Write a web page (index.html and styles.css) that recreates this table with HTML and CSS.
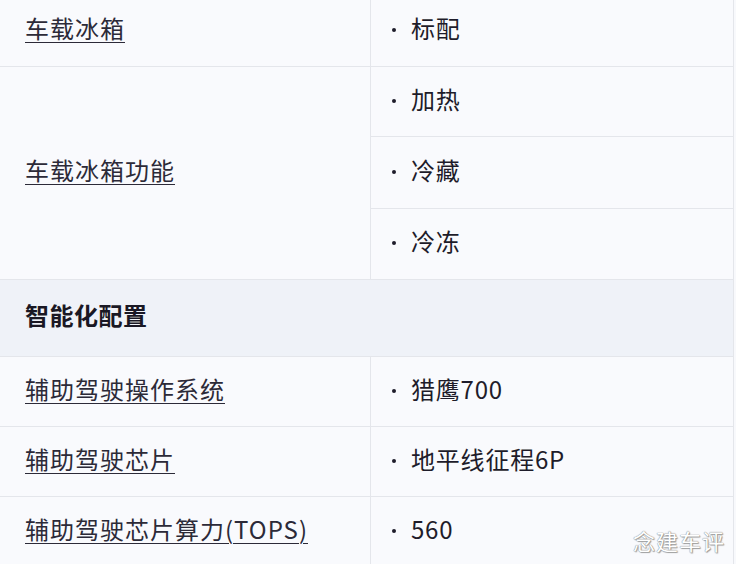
FILE: index.html
```html
<!DOCTYPE html>
<html lang="zh-CN">
<head>
<meta charset="utf-8">
<link rel="stylesheet" href="styles.css">
</head>
<body>
<div class="page">
  <div class="spec">
    <div class="cell label"><span class="link">车载冰箱</span></div>
    <div class="cell value"><span class="item">标配</span></div>

    <div class="cell label span3"><span class="link">车载冰箱功能</span></div>
    <div class="cell value"><span class="item">加热</span></div>
    <div class="cell value"><span class="item">冷藏</span></div>
    <div class="cell value"><span class="item">冷冻</span></div>

    <div class="cell section">智能化配置</div>

    <div class="cell label"><span class="link">辅助驾驶操作系统</span></div>
    <div class="cell value"><span class="item">猎鹰700</span></div>

    <div class="cell label"><span class="link">辅助驾驶芯片</span></div>
    <div class="cell value"><span class="item">地平线征程6P</span></div>

    <div class="cell label"><span class="link">辅助驾驶芯片算力(TOPS)</span></div>
    <div class="cell value"><span class="item">560</span></div>
  </div>
  <div class="watermark">念建车评</div>
</div>
</body>
</html>
```
FILE: styles.css
```css
html, body {
  margin: 0;
  padding: 0;
  background: #f8f9fc;
}
body {
  width: 736px;
  height: 564px;
  overflow: hidden;
  font-family: "Noto Sans CJK SC", "Noto Sans", sans-serif;
  color: #1e1c2a;
}
.page {
  position: relative;
  width: 736px;
  height: 564px;
  overflow: hidden;
}
.spec {
  display: grid;
  grid-template-columns: 371px 362px;
  grid-template-rows: 71px 70px 72px 71px 77px 70px 70px 70px;
  margin-top: -4px;
  border-right: 1px solid #e4e6eb;
  width: 733px;
}
.cell {
  box-sizing: border-box;
  display: flex;
  align-items: center;
  border-bottom: 1px solid #e4e6eb;
  font-size: 24px;
  line-height: 1;
  background: #f9fafd;
  padding-bottom: 6px;
}
.label {
  border-right: 1px solid #e4e6eb;
  padding-left: 25px;
}
.value {
  padding-left: 21px;
}
.span3 { grid-row: span 3; }
.section {
  grid-column: 1 / -1;
  background: #eff2f8;
  font-weight: 700;
  padding-left: 25px;
  color: #1a1824;
  letter-spacing: 0.5px;
}
.link {
  color: #2c2a38;
  text-decoration: underline;
  text-decoration-thickness: 1px;
  text-underline-offset: 4px;
  letter-spacing: 1px;
}
.item {
  display: flex;
  align-items: center;
  letter-spacing: 0.8px;
}
.item::before {
  content: "";
  width: 4px;
  height: 4px;
  border-radius: 50%;
  background: #1e1c2a;
  margin-right: 15px;
  margin-top: 4px;
}
.watermark {
  position: absolute;
  right: 11px;
  bottom: 13px;
  font-size: 22px;
  line-height: 1;
  color: #ffffff;
  letter-spacing: 1px;
  text-shadow: 0 0 1px #8c8c8c, 0 0 1px #8c8c8c, 1px 1px 1px #a0a0a0;
}
```
